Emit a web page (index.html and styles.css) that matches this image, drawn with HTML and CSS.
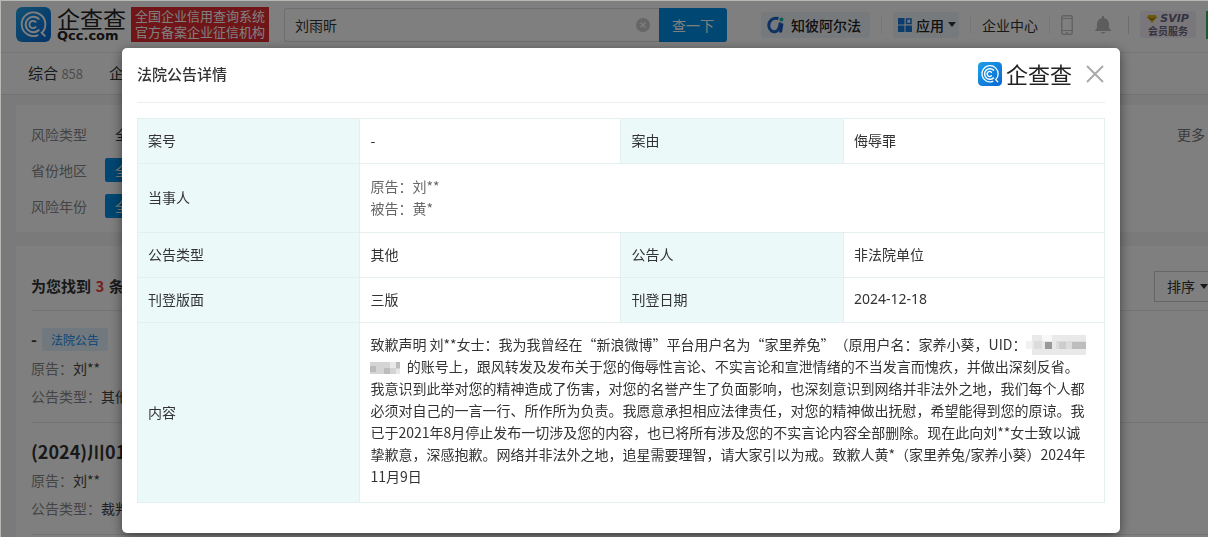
FILE: index.html
```html
<!DOCTYPE html>
<html lang="zh-CN">
<head>
<meta charset="utf-8">
<title>法院公告详情</title>
<link rel="stylesheet" href="styles.css">
</head>
<body>
<svg class="defs" aria-hidden="true">
  <defs>
    <linearGradient id="blue" x1="0" y1="0" x2="1" y2="1"><stop offset="0" stop-color="#20a0e6"/><stop offset="1" stop-color="#0868d4"/></linearGradient>
    <symbol id="qcc" viewBox="0 0 34 34">
      <rect width="34" height="34" rx="6" fill="url(#blue)"/>
      <g fill="none" stroke="#fff" stroke-linecap="round">
        <path d="M21 27.500A11.500 11.500 0 1 1 28.500 17Q28.500 22 25 25L28 28" stroke-width="1.800"/>
        <path d="M22 22.500A7.500 7.500 0 1 1 22 11.500" stroke-width="2"/>
        <path d="M19 19.500A3.500 3.500 0 1 1 19 14.500" stroke-width="1.800"/>
      </g>
    </symbol>
  </defs>
</svg>
<div class="page">
  <header class="topbar">
    <a class="brand" href="#">
      <svg class="brand-icon" aria-hidden="true"><use href="#qcc"/></svg>
      <span class="brand-words"><span class="brand-name">企查查</span><span class="brand-domain">Qcc.com</span></span>
    </a>
    <div class="slogan">全国企业信用查询系统<br>官方备案企业征信机构</div>
    <form class="search">
      <input class="search-input" type="text" value="刘雨昕" aria-label="搜索">
      <button class="clear" type="button" aria-label="清空"><svg viewBox="0 0 14 14"><circle cx="7" cy="7" r="7" fill="#ccc"/><path d="M4.500 4.500l5 5m0-5l-5 5" stroke="#fff" stroke-width="1.300"/></svg></button>
      <button class="search-btn" type="button">查一下</button>
    </form>
    <nav class="nav">
      <a class="pill alpha" href="#"><svg class="i18" viewBox="0 0 18 18" fill="none"><path d="M11.500 2.500C5.500 1 1.500 5 1.800 10c.3 4.500 4 6.500 7 5.500 3-1 4-5 4.500-9" stroke="#1c66c4" stroke-width="3"/><path d="M13.500 7.500l-1.500 9h3l1.500-9z" fill="#1d54c0"/><circle cx="14.500" cy="3.500" r="2" fill="#16b8a0"/></svg>知彼阿尔法</a>
      <span class="sep"></span>
      <a class="pill apps" href="#"><svg class="i14" viewBox="0 0 14 14" fill="#1878d8"><path d="M0 0h6.500v6.500H0zM0 7.500h6.500V14H0zM7.500 7.500H14V14H7.500z"/><path d="M8.500 1h4.500v4.500H8.500z" fill="none" stroke="#1878d8" stroke-width="1.600"/></svg>应用<i class="caret"></i></a>
      <span class="sep"></span>
      <a class="center-link" href="#">企业中心</a>
      <span class="sep"></span>
      <a class="phone" href="#" aria-label="手机版"><svg viewBox="0 0 12 20" fill="none" stroke="#c2c2c2"><rect x=".8" y=".8" width="10.400" height="18.400" rx="1.500" stroke-width="1.400"/><path d="M1 3.500h10M1 15.500h10M5 17.500h2"/></svg></a>
      <a class="bell" href="#" aria-label="消息"><svg viewBox="0 0 16 18" fill="#bababa"><path d="M7 0h2v2c3 .5 5 3 5 6v4l2 2.500V15H0v-.5L2 12V8c0-3 2-5.500 5-6zM5.500 16h5q-2.500 3-5 0z"/></svg></a>
      <span class="sep strong"></span>
      <a class="svip" href="#"><span class="svip-top"><svg viewBox="0 0 10 8"><path d="M1 0h8l1 2.500L5 8 0 2.500z" fill="#d9b51c"/><path d="M2.500 2.500L5 5l2.500-2.500" fill="none" stroke="#6b4b00"/></svg>SVIP</span><span>会员服务</span></a>
      <span class="edge"></span>
    </nav>
  </header>
  <div class="tabs"><a class="tab active" href="#">综合 <span>858</span></a><a class="tab" href="#">企业</a></div>
  <main class="main">
    <section class="card filters">
      <div class="filter"><span class="label">风险类型</span><a class="opt" href="#">全部</a><a class="more" href="#">更多</a></div>
      <div class="filter"><span class="label">省份地区</span><a class="opt on" href="#">全部</a></div>
      <div class="filter"><span class="label">风险年份</span><a class="opt on" href="#">全部</a></div>
    </section>
    <section class="card results">
      <div class="results-head"><h2>为您找到 <em>3</em> 条</h2><button class="sort" type="button">排序<i class="caret"></i></button></div>
      <article class="item">
        <h3>- <span class="tag">法院公告</span></h3>
        <p>原告：<b>刘**</b></p>
        <p>公告类型：<b>其他</b></p>
      </article>
      <article class="item">
        <h3 class="case">(2024)川01</h3>
        <p>原告：<b>刘**</b></p>
        <p>公告类型：<b>裁判文书</b></p>
      </article>
    </section>
  </main>
</div>
<div class="overlay">
  <section class="modal" role="dialog" aria-labelledby="dialog-title">
    <div class="modal-head">
      <h1 id="dialog-title">法院公告详情</h1>
      <span class="modal-brand"><svg aria-hidden="true"><use href="#qcc"/></svg><span>企查查</span></span>
      <button class="close" type="button" aria-label="关闭"><svg viewBox="0 0 18 18"><path d="M1 1l16 16M17 1L1 17" stroke="#aaa" stroke-width="2"/></svg></button>
    </div>
    <table class="detail">
      <colgroup><col class="c-label"><col class="c-value"><col class="c-label"><col class="c-value"></colgroup>
      <tr><th scope="row">案号</th><td>-</td><th scope="row">案由</th><td>侮辱罪</td></tr>
      <tr><th scope="row">当事人</th><td class="party" colspan="3">原告：刘**<br>被告：黄*</td></tr>
      <tr><th scope="row">公告类型</th><td>其他</td><th scope="row">公告人</th><td>非法院单位</td></tr>
      <tr><th scope="row">刊登版面</th><td>三版</td><th scope="row">刊登日期</th><td class="date">2024-12-18</td></tr>
      <tr class="content"><th scope="row">内容</th><td colspan="3">致歉声明 刘**女士：我为我曾经在“新浪微博”平台用户名为“家里养兔”（原用户名：家养小葵，UID：<svg class="mosaic wide" viewBox="0 0 60 20" shape-rendering="crispEdges"><path fill="#f2f2f2" d="M0 6h8v8H0z"/><path fill="#e9e9e9" d="M6 0h54v20H6z"/><path fill="#dcdcdc" d="M8 6h8v8H8zM30 6h30v8H30z"/><path fill="#f8f8f8" d="M16 0h10v6H16z"/><path fill="#999" d="M19 7h7v7h-7z"/><path fill="#bdbdbd" d="M46 7h14v7H46z"/><path fill="#ccc" d="M33 7h7v7h-7z"/></svg> <svg class="mosaic" viewBox="0 0 30 12" shape-rendering="crispEdges"><path fill="#d4d4d4" d="M0 0h30v12H0z"/><path fill="#bcbcbc" d="M0 4h6v6H0zM14 6h6v6h-6zM26 0h4v6h-4z"/><path fill="#e8e8e8" d="M20 0h6v6h-6zM26 7h4v5h-4z"/></svg>&nbsp; 的账号上，跟风转发及发布关于您的侮辱性言论、不实言论和宣泄情绪的不当发言而愧疚，并做出深刻反省。我意识到此举对您的精神造成了伤害，对您的名誉产生了负面影响，也深刻意识到网络并非法外之地，我们每个人都必须对自己的一言一行、所作所为负责。我愿意承担相应法律责任，对您的精神做出抚慰，希望能得到您的原谅。我已于2021年8月停止发布一切涉及您的内容，也已将所有涉及您的不实言论内容全部删除。现在此向刘**女士致以诚挚歉意，深感抱歉。网络并非法外之地，追星需要理智，请大家引以为戒。致歉人黄*（家里养兔/家养小葵）2024年11月9日</td></tr>
    </table>
  </section>
</div>
</body>
</html>
```
FILE: styles.css
```css
* { box-sizing: border-box; }
body { margin: 0; height: 100vh; overflow: hidden; padding: 1px 0 0 1px; background: #b6bab2; color: #333; font: 14px/22px "Noto Sans CJK SC", "Noto Sans", sans-serif; text-spacing-trim: space-all; }
a { color: inherit; text-decoration: none; }
button, input { font: inherit; color: inherit; border: 0; margin: 0; padding: 0; background: none; }
h1, h2, h3, p { margin: 0; }
svg { display: block; }
.defs { position: absolute; width: 0; height: 0; }
.page { height: 100%; background: #f5f5f5; overflow: hidden; }

.topbar { display: flex; align-items: center; height: 52px; padding-left: 15px; padding-bottom: 4px; background: #fff; border-bottom: 1px solid #eee; overflow: hidden; }
.brand { display: flex; gap: 6px; flex: none; width: 115px; color: #222; }
.brand-icon { width: 35px; height: 35px; }
.brand-words { display: flex; flex-direction: column; }
.brand-name { font-size: 23px; line-height: 22px; font-weight: 400; }
.brand-domain { font: bold 13px/14px "DejaVu Sans", sans-serif; }
.slogan { flex: none; padding: 1px 4px 2px; background: #e02a30; color: #fff; font-size: 13px; line-height: 16px; }
.search { position: relative; display: flex; flex: 1; margin-left: 15px; height: 34px; }
.search-input { flex: 1; min-width: 0; padding: 0 36px 0 10px; border: 1px solid #ddd; border-right: 0; border-radius: 3px 0 0 3px; }
.clear { position: absolute; right: 77px; top: 10px; width: 14px; height: 14px; }
.search-btn { width: 68px; background: #008ee6; color: #fff; border-radius: 0 3px 3px 0; }
.nav { display: flex; flex: none; align-items: center; width: 447px; margin-left: 34px; white-space: nowrap; }
.nav > * { flex: none; }
.pill { display: flex; align-items: center; height: 26px; background: #eef4f8; border-radius: 3px; font-weight: 500; color: #222; }
.alpha { gap: 6px; width: 109px; padding-left: 6px; }
.i18 { width: 18px; height: 18px; }
.apps { gap: 4px; width: 66px; padding-left: 5px; }
.i14 { width: 14px; height: 14px; }
.sep { width: 1px; height: 18px; margin: 0 11px; background: #eee; }
.strong { margin: 0 11px 0 17px; background: #ddd; }
.caret { display: inline-block; border: 4px solid transparent; border-top: 5px solid #333; border-bottom: 0; }
.phone { width: 12px; margin-right: 22px; }
.phone svg { height: 20px; }
.bell { width: 16px; }
.svip { display: flex; flex-direction: column; align-items: center; width: 56px; padding: 1px 0; background: #f3eff6; border-radius: 3px; color: #6c6680; font-size: 10px; line-height: 12px; font-weight: 700; }
.svip-top { display: flex; align-items: center; gap: 3px; font: italic bold 11px/13px "DejaVu Sans", sans-serif; }
.svip-top svg { width: 10px; height: 8px; }
.edge { width: 4px; height: 28px; margin-left: 10px; background: #3fae63; }

.tabs { display: flex; gap: 26px; height: 42px; padding: 9px 27px; background: #fff; border-bottom: 1px solid #e6e6e6; }
.tab { font-size: 15px; color: #333; }
.tab span { font-size: 13px; color: #999; }
.main { display: grid; gap: 14px; padding: 10px 0 0 15px; }
.card { background: #fff; padding-left: 15px; }
.filters { display: grid; gap: 12px; padding-top: 17px; padding-bottom: 14px; }
.filter { display: flex; align-items: center; height: 24px; }
.label { width: 74px; color: #888; }
.opt { padding: 1px 10px; color: #333; border-radius: 2px; }
.on { background: #008ee6; color: #fff; }
.more { margin-left: auto; padding-right: 3px; color: #777; }
.results { min-height: 300px; padding-top: 16px; }
.results-head { display: flex; align-items: center; justify-content: space-between; height: 49px; border-bottom: 1px solid #e8e8e8; }
.results-head h2 { font-size: 15px; }
.results-head em { margin: 0 1px; font-style: normal; color: #f04040; }
.sort { display: flex; align-items: center; gap: 5px; width: 54px; height: 31px; padding-left: 12px; border: 1px solid #ccc; border-right: 0; }
.item { display: grid; gap: 6px; padding: 16px 0 15px; border-bottom: 1px solid #e8e8e8; }
.item h3 { display: flex; align-items: center; gap: 5px; height: 24px; font-size: 16px; }
.item .case { font-size: 18px; }
.tag { padding: 0 9px; background: #e5f2fd; color: #128bed; font-size: 12px; font-weight: 400; line-height: 23px; border-radius: 2px; }
.item p { color: #888; }
.item b { font-weight: 400; color: #444; }

.overlay { position: fixed; inset: 1px 0 0 1px; padding: 47px 88px 4px 121px; background: rgba(0, 0, 0, .5); }
.modal { height: 100%; padding: 0 15px; background: #fff; border-radius: 5px; box-shadow: 0 3px 12px rgba(0, 0, 0, .5); }
.modal-head { display: flex; align-items: center; height: 55px; padding-bottom: 2px; margin-bottom: 15px; border-bottom: 1px solid #eee; }
.modal-head h1 { flex: 1; font-size: 15px; line-height: 22px; font-weight: 500; }
.modal-brand { display: flex; align-items: center; gap: 4px; font-size: 22px; line-height: 22px; font-weight: 400; color: #222; }
.modal-brand span { padding-bottom: 3px; }
.modal-brand svg { width: 24px; height: 24px; }
.close { width: 18px; height: 18px; margin-left: 14px; margin-right: 1px; }
.detail { width: 100%; table-layout: fixed; border-collapse: collapse; }
.c-label { width: 23%; }
.c-value { width: 27%; }
.detail th, .detail td { padding: 10px 10px 12px; border: 1px solid #e4eff0; text-align: left; font-weight: 400; }
.detail th { background: #ebf9f9; }
.detail .party { padding: 11px 10px 13px; color: #666; }
.detail .date { font-family: "Noto Sans", sans-serif; }
.detail .content td { padding: 10px 16px 15px 10px; }
.mosaic { display: inline-block; width: 30px; height: 12px; vertical-align: -2px; }
.wide { width: 60px; height: 20px; vertical-align: -5px; }
```
